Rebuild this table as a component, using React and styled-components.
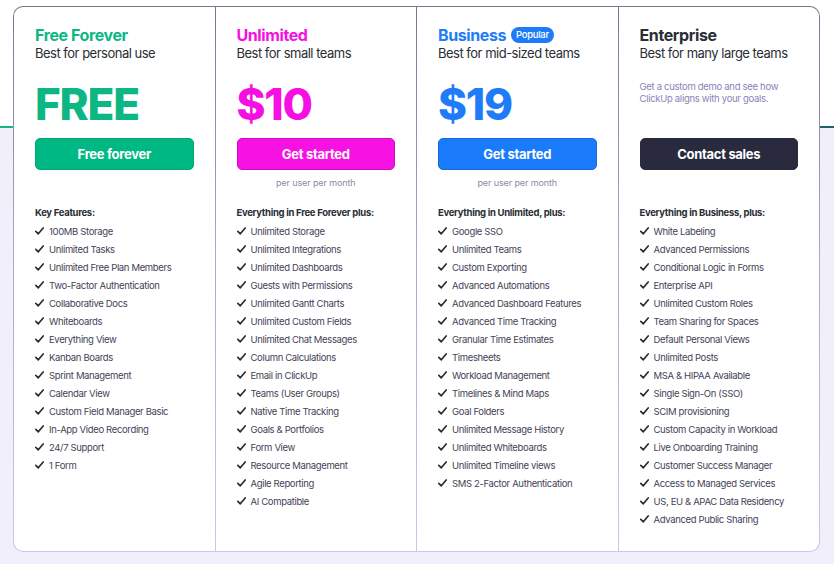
import React from 'react';
import styled, { createGlobalStyle } from 'styled-components';

const GlobalStyle = createGlobalStyle`
  html, body {
    margin: 0;
    padding: 0;
  }
  body {
    font-family: 'Inter', 'Liberation Sans', sans-serif;
    -webkit-font-smoothing: antialiased;
  }
`;

const Page = styled.div`
  width: 834px;
  height: 564px;
  overflow: hidden;
  padding-top: 6px;
  box-sizing: border-box;
  background:
    linear-gradient(90deg, #17b584, #21606f) 0 126px / 100% 2px no-repeat,
    linear-gradient(#ffffff 0 127px, #f1f0fa 127px);
`;

const Card = styled.div`
  margin-left: 13px;
  width: 807px;
  height: 546px;
  box-sizing: border-box;
  border: 1px solid transparent;
  border-radius: 10px;
  overflow: hidden;
  background: linear-gradient(180deg, #78778e 0%, #a9a6cf 45%, #cac6f1 100%) border-box;
  display: grid;
  grid-template-columns: repeat(4, 1fr);
  gap: 1px;
`;

const Column = styled.div`
  background: #fff;
  padding: 18px 21px 0 21px;
  display: flex;
  flex-direction: column;
`;

const TitleRow = styled.div`
  display: flex;
  align-items: center;
  gap: 5px;
  height: 20px;
`;

const Title = styled.h2`
  margin: 0;
  font-size: 16px;
  line-height: 20px;
  font-weight: 700;
  letter-spacing: -0.4px;
  color: ${(p) => p.$color};
`;

const Badge = styled.span`
  background: #1f7cf9;
  color: #fff;
  font-size: 9.5px;
  font-weight: 500;
  line-height: 16px;
  padding: 0 5px;
  border-radius: 8px;
  letter-spacing: -0.3px;
`;

const Subtitle = styled.div`
  font-size: 13px;
  line-height: 16px;
  color: #292d34;
  letter-spacing: -0.5px;
`;

const PriceArea = styled.div`
  height: 77px;
  display: flex;
  flex-direction: column;
`;

const Price = styled.div`
  margin-top: 21px;
  font-size: 44px;
  line-height: 45px;
  font-weight: 800;
  letter-spacing: -1.2px;
  color: ${(p) => p.$color};
`;

const Note = styled.p`
  margin: 20px 0 0;
  font-size: 9.5px;
  line-height: 12px;
  color: #8c82b8;
  letter-spacing: -0.3px;
`;

const Button = styled.button`
  height: 32px;
  width: 100%;
  border-radius: 5px;
  border: 1px solid ${(p) => p.$border};
  background: ${(p) => p.$bg};
  color: #fff;
  font-family: inherit;
  font-size: 13px;
  font-weight: 700;
  letter-spacing: -0.3px;
  cursor: pointer;
`;

const PerUser = styled.div`
  margin-top: 6px;
  height: 14px;
  font-size: 9px;
  line-height: 14px;
  text-align: center;
  color: #8d89a8;
  letter-spacing: -0.1px;
  visibility: ${(p) => (p.$hidden ? 'hidden' : 'visible')};
`;

const ListHead = styled.div`
  margin-top: 14px;
  font-size: 9.5px;
  line-height: 18px;
  font-weight: 700;
  color: #292d34;
  letter-spacing: -0.3px;
`;

const List = styled.ul`
  list-style: none;
  margin: 0;
  padding: 0;
`;

const Item = styled.li`
  display: flex;
  align-items: center;
  gap: 5px;
  height: 18px;
  font-size: 9.5px;
  color: #434356;
  letter-spacing: -0.35px;
  white-space: nowrap;
`;

const Check = () => (
  <svg width="9" height="8" viewBox="0 0 9 8" fill="none">
    <path d="M0.8 4.3 L3.3 6.8 L8.2 1" stroke="#292d34" strokeWidth="1.7" strokeLinecap="round" strokeLinejoin="round" />
  </svg>
);

const plans = [
  {
    title: 'Free Forever',
    color: '#0cb784',
    subtitle: 'Best for personal use',
    price: 'FREE',
    button: 'Free forever',
    bg: '#00b883',
    border: '#08a577',
    perUser: false,
    head: 'Key Features:',
    features: [
      '100MB Storage',
      'Unlimited Tasks',
      'Unlimited Free Plan Members',
      'Two-Factor Authentication',
      'Collaborative Docs',
      'Whiteboards',
      'Everything View',
      'Kanban Boards',
      'Sprint Management',
      'Calendar View',
      'Custom Field Manager Basic',
      'In-App Video Recording',
      '24/7 Support',
      '1 Form',
    ],
  },
  {
    title: 'Unlimited',
    color: '#f50fe3',
    subtitle: 'Best for small teams',
    price: '$10',
    button: 'Get started',
    bg: '#f712e3',
    border: '#d20dc4',
    perUser: true,
    head: 'Everything in Free Forever plus:',
    features: [
      'Unlimited Storage',
      'Unlimited Integrations',
      'Unlimited Dashboards',
      'Guests with Permissions',
      'Unlimited Gantt Charts',
      'Unlimited Custom Fields',
      'Unlimited Chat Messages',
      'Column Calculations',
      'Email in ClickUp',
      'Teams (User Groups)',
      'Native Time Tracking',
      'Goals & Portfolios',
      'Form View',
      'Resource Management',
      'Agile Reporting',
      'AI Compatible',
    ],
  },
  {
    title: 'Business',
    color: '#1f7cf9',
    subtitle: 'Best for mid-sized teams',
    price: '$19',
    button: 'Get started',
    bg: '#1b7cfb',
    border: '#186ad8',
    perUser: true,
    popular: true,
    head: 'Everything in Unlimited, plus:',
    features: [
      'Google SSO',
      'Unlimited Teams',
      'Custom Exporting',
      'Advanced Automations',
      'Advanced Dashboard Features',
      'Advanced Time Tracking',
      'Granular Time Estimates',
      'Timesheets',
      'Workload Management',
      'Timelines & Mind Maps',
      'Goal Folders',
      'Unlimited Message History',
      'Unlimited Whiteboards',
      'Unlimited Timeline views',
      'SMS 2-Factor Authentication',
    ],
  },
  {
    title: 'Enterprise',
    color: '#292d34',
    subtitle: 'Best for many large teams',
    note: 'Get a custom demo and see how ClickUp aligns with your goals.',
    button: 'Contact sales',
    bg: '#292a3e',
    border: '#292a3e',
    perUser: false,
    head: 'Everything in Business, plus:',
    features: [
      'White Labeling',
      'Advanced Permissions',
      'Conditional Logic in Forms',
      'Enterprise API',
      'Unlimited Custom Roles',
      'Team Sharing for Spaces',
      'Default Personal Views',
      'Unlimited Posts',
      'MSA & HIPAA Available',
      'Single Sign-On (SSO)',
      'SCIM provisioning',
      'Custom Capacity in Workload',
      'Live Onboarding Training',
      'Customer Success Manager',
      'Access to Managed Services',
      'US, EU & APAC Data Residency',
      'Advanced Public Sharing',
    ],
  },
];

const App = () => {
  return (
    <Page>
      <GlobalStyle />
      <Card>
        {plans.map((plan) => (
          <Column key={plan.title}>
            <TitleRow>
              <Title $color={plan.color}>{plan.title}</Title>
              {plan.popular && <Badge>Popular</Badge>}
            </TitleRow>
            <Subtitle>{plan.subtitle}</Subtitle>
            <PriceArea>
              {plan.price && <Price $color={plan.color}>{plan.price}</Price>}
              {plan.note && <Note>{plan.note}</Note>}
            </PriceArea>
            <Button $bg={plan.bg} $border={plan.border}>{plan.button}</Button>
            <PerUser $hidden={!plan.perUser}>per user per month</PerUser>
            <ListHead>{plan.head}</ListHead>
            <List>
              {plan.features.map((f) => (
                <Item key={f}>
                  <Check />
                  {f}
                </Item>
              ))}
            </List>
          </Column>
        ))}
      </Card>
    </Page>
  );
};

export default App;
